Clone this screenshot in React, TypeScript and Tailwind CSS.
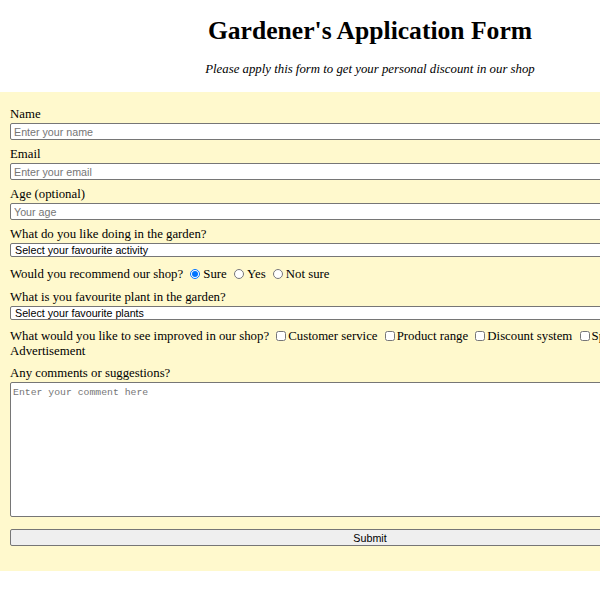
import React from "react";

const serif = "font-['Liberation_Serif',serif]";
const inputCls =
  "block w-full h-[17px] border border-[#767676] rounded-[2px] bg-white px-[3px] text-[10.7px] leading-[15px] text-black font-['Liberation_Sans',Arial,sans-serif] placeholder:text-[#757575] outline-none";
const selectCls =
  "block w-full h-[14px] border border-[#767676] rounded-[2px] bg-white pl-[4px] py-0 text-[10.7px] leading-[12px] text-black font-['Liberation_Sans',Arial,sans-serif] appearance-none outline-none";
const labelCls = "block h-[18px] leading-[18px]";
const radioCls = "inline-block align-[-1px] w-[10px] h-[10px] m-0 ml-[4px] mr-[3px] accent-[#0075ff]";
const checkCls = "inline-block align-[-1px] w-[10px] h-[10px] m-0 ml-[4px] mr-[2px]";

export default function App() {
  return (
    <div className={`w-full h-[600px] overflow-hidden bg-white text-black ${serif}`}>
      <div className="w-[740px]">
        <h1 className="pt-[16px] text-center text-[25.6px] leading-[30px] font-bold">
          Gardener's Application Form
        </h1>
        <p className="mt-[16px] text-center text-[12.8px] leading-[15px] italic">
          Please apply this form to get your personal discount in our shop
        </p>
        <form
          className="mt-[15px] bg-[#fff9cd] px-[10px] pt-[13px] pb-[25px] text-[12.8px]"
          onSubmit={(e) => e.preventDefault()}
        >
          <label className={labelCls}>Name</label>
          <input className={inputCls} placeholder="Enter your name" />
          <label className={`${labelCls} mt-[5px]`}>Email</label>
          <input className={inputCls} placeholder="Enter your email" />
          <label className={`${labelCls} mt-[5px]`}>Age (optional)</label>
          <input className={inputCls} placeholder="Your age" />

          <label className={`${labelCls} mt-[5px]`}>What do you like doing in the garden?</label>
          <select className={selectCls} defaultValue="">
            <option value="">Select your favourite activity</option>
            <option>Planting</option>
            <option>Watering</option>
          </select>

          <div className="mt-[8px] h-[18px] leading-[18px] whitespace-nowrap">
            Would you recommend our shop?{" "}
            <input type="radio" name="rec" defaultChecked className={radioCls} />
            Sure{" "}
            <input type="radio" name="rec" className={radioCls} />
            Yes{" "}
            <input type="radio" name="rec" className={radioCls} />
            Not sure
          </div>

          <label className={`${labelCls} mt-[5px]`}>What is you favourite plant in the garden?</label>
          <select className={selectCls} defaultValue="">
            <option value="">Select your favourite plants</option>
            <option>Roses</option>
            <option>Tulips</option>
          </select>

          <div className="mt-[9px] leading-[14.5px]">
            <span className="whitespace-nowrap">
              What would you like to see improved in our shop?{" "}
              <input type="checkbox" className={checkCls} />
              Customer service{" "}
              <input type="checkbox" className={checkCls} />
              Product range{" "}
              <input type="checkbox" className={checkCls} />
              Discount system{" "}
              <input type="checkbox" className={checkCls} />
              Special offers{" "}
              <input type="checkbox" className={checkCls} />
            </span>
            <br />
            Advertisement
          </div>

          <label className={`${labelCls} mt-[6px]`}>Any comments or suggestions?</label>
          <textarea
            className="block w-full h-[135px] border border-[#767676] rounded-[2px] bg-white px-[2px] py-[3px] text-[9.8px] leading-[13px] font-['Liberation_Mono',monospace] placeholder:text-[#757575] resize-none outline-none"
            placeholder="Enter your comment here"
          />

          <button
            type="submit"
            className="block mt-[12px] w-full h-[17px] border border-[#767676] rounded-[2px] bg-[#efefef] text-[10.7px] leading-[14px] text-black font-['Liberation_Sans',Arial,sans-serif]"
          >
            Submit
          </button>
        </form>
      </div>
    </div>
  );
}
